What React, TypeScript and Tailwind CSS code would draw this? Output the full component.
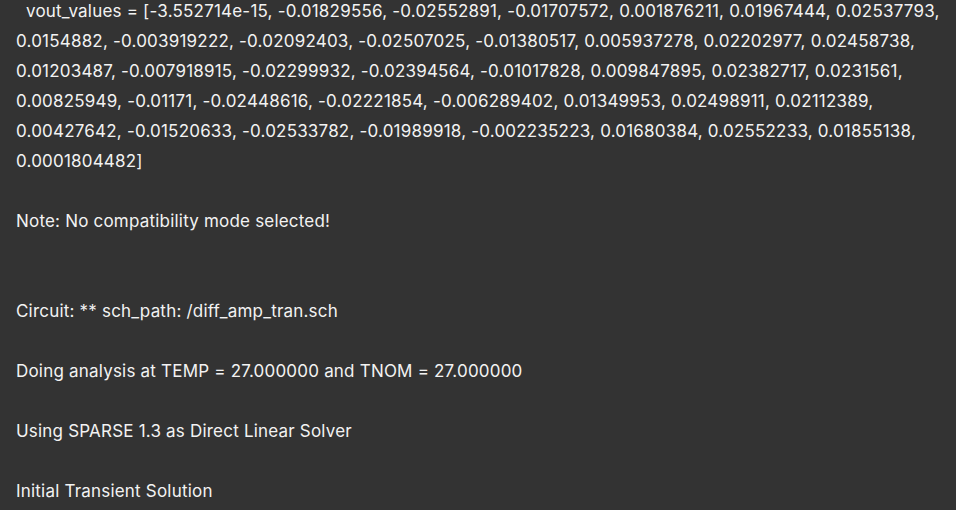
const vout = [
  "-3.552714e-15", "-0.01829556", "-0.02552891", "-0.01707572", "0.001876211", "0.01967444", "0.02537793",
  "0.0154882", "-0.003919222", "-0.02092403", "-0.02507025", "-0.01380517", "0.005937278", "0.02202977", "0.02458738",
  "0.01203487", "-0.007918915", "-0.02299932", "-0.02394564", "-0.01017828", "0.009847895", "0.02382717", "0.0231561",
  "0.00825949", "-0.01171", "-0.02448616", "-0.02221854", "-0.006289402", "0.01349953", "0.02498911", "0.02112389",
  "0.00427642", "-0.01520633", "-0.02533782", "-0.01989918", "-0.002235223", "0.01680384", "0.02552233", "0.01855138",
  "0.0001804482",
];

const lines = [
  "  vout_values = [" + vout.join(", ") + "]",
  "",
  "Note: No compatibility mode selected!",
  "",
  "",
  "Circuit: ** sch_path: /diff_amp_tran.sch",
  "",
  "Doing analysis at TEMP = 27.000000 and TNOM = 27.000000",
  "",
  "Using SPARSE 1.3 as Direct Linear Solver",
  "",
  "Initial Transient Solution",
];

const App = () => {
  return (
    <div className="h-[510px] w-[956px] overflow-hidden bg-[#333333] text-[#f2f2f2] font-['Inter',sans-serif] text-[17px] tracking-[0.2px] leading-[30px]">
      <div className="-mt-1 pl-4 pr-1">
        {lines.map((line, i) => (
          <div key={i} className="whitespace-pre-wrap min-h-[30px]">
            {line}
          </div>
        ))}
      </div>
    </div>
  );
};

export default App;
